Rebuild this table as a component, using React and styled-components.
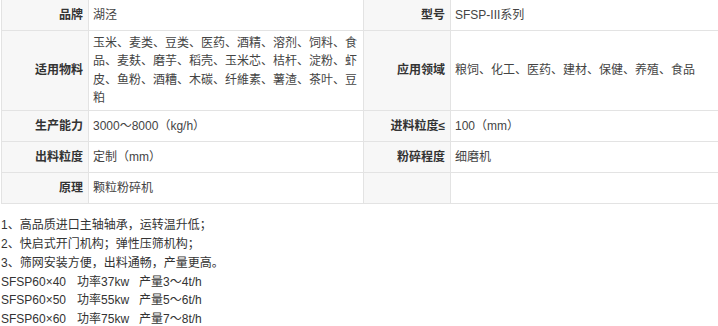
import React from "react";
import styled, { createGlobalStyle } from "styled-components";

const Global = createGlobalStyle`
  html, body { margin: 0; padding: 0; background: #fff; }
  body {
    font-family: "Liberation Sans", "Noto Sans CJK SC", sans-serif;
    font-size: 12px;
    color: #333;
    overflow: hidden;
  }
`;

const Page = styled.div`
  width: 718px;
  height: 326px;
  overflow: hidden;
  padding-left: 1px;
  box-sizing: border-box;
`;

const Table = styled.table`
  width: 717px;
  margin-top: -1px;
  border-collapse: collapse;
  table-layout: fixed;
`;

const Cell = styled.td`
  border: 1px solid #e3e3e3;
  padding: 3px 3px 3px 4px;
  height: 24px;
  line-height: 18.3px;
  vertical-align: middle;
  font-size: 12px;
  word-break: break-all;
`;

const Label = styled(Cell)`
  background: #f7f7f7;
  text-align: right;
  font-weight: bold;
  color: #333;
  padding-right: 5px;
`;

const Value = styled(Cell)`
  color: #444;
  text-align: left;
`;

const Notes = styled.div`
  margin-top: 12px;
  line-height: 18.8px;
  font-size: 12px;
  color: #333;
`;

const Line = styled.div`
  white-space: pre;
`;

const Gap = styled.span`
  display: inline-block;
  width: ${(p) => p.$w}px;
`;

const rows = [
  ["品牌", "湖泾", "型号", "SFSP-III系列"],
  [
    "适用物料",
    "玉米、麦类、豆类、医药、酒精、溶剂、饲料、食品、麦麸、磨芋、稻壳、玉米芯、桔杆、淀粉、虾皮、鱼粉、酒糟、木碳、纤維素、薯渣、茶叶、豆粕",
    "应用领域",
    "粮饲、化工、医药、建材、保健、养殖、食品",
  ],
  ["生产能力", "3000～8000（kg/h）", "进料粒度≤", "100（mm）"],
  ["出料粒度", "定制（mm）", "粉碎程度", "细磨机"],
  ["原理", "颗粒粉碎机", "", ""],
];

const models = [
  ["SFSP60×40", "功率37kw", "产量3～4t/h"],
  ["SFSP60×50", "功率55kw", "产量5～6t/h"],
  ["SFSP60×60", "功率75kw", "产量7～8t/h"],
];

const notes = [
  "1、高品质进口主轴轴承，运转温升低；",
  "2、快启式开门机构；弹性压筛机构；",
  "3、筛网安装方便，出料通畅，产量更高。",
];

export default function App() {
  return (
    <Page>
      <Global />
      <Table>
        <colgroup>
          <col style={{ width: 87 }} />
          <col style={{ width: 275 }} />
          <col style={{ width: 87 }} />
          <col style={{ width: 268 }} />
        </colgroup>
        <tbody>
          {rows.map((r, i) => (
            <tr key={i}>
              <Label>{r[0]}</Label>
              <Value>{r[1]}</Value>
              <Label>{r[2]}</Label>
              <Value>{r[3]}</Value>
            </tr>
          ))}
        </tbody>
      </Table>
      <Notes>
        {notes.map((n, i) => (
          <Line key={i}>{n}</Line>
        ))}
        {models.map((m, i) => (
          <Line key={"m" + i}>
            {m[0]}
            <Gap $w={11} />
            {m[1]}
            <Gap $w={10} />
            {m[2]}
          </Line>
        ))}
        <Line>价格请来电咨询厂家。</Line>
      </Notes>
    </Page>
  );
}
